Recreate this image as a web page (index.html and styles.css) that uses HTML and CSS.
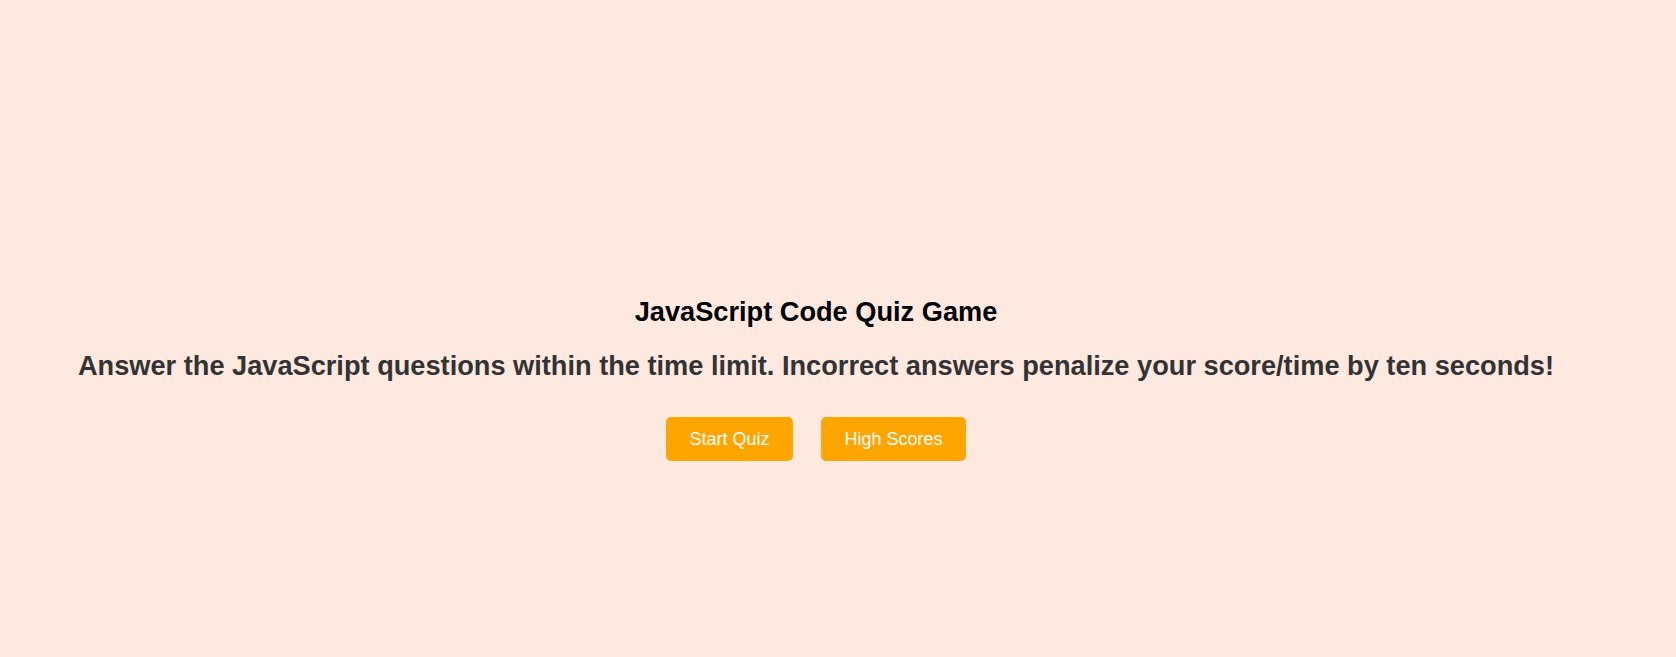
FILE: index.html
```html
<!DOCTYPE html>
<html lang="en">
<head>
<meta charset="utf-8">
<title>JavaScript Code Quiz Game</title>
<link rel="stylesheet" href="styles.css">
</head>
<body>
<main class="start-screen">
  <h1 class="title">JavaScript Code Quiz Game</h1>
  <p class="intro">Answer the JavaScript questions within the time limit. Incorrect answers penalize your score/time by ten seconds!</p>
  <div class="actions">
    <button class="btn" type="button">Start Quiz</button>
    <button class="btn" type="button">High Scores</button>
  </div>
</main>
</body>
</html>
```
FILE: styles.css
```css
html, body {
  margin: 0;
  padding: 0;
}
body {
  background: #fee9e0;
  font-family: "Liberation Sans", Arial, sans-serif;
  height: 657px;
}
.start-screen {
  display: flex;
  flex-direction: column;
  align-items: center;
  padding: 296px 44px 0 0;
}
.title {
  margin: 0;
  font-size: 27.2px;
  line-height: 32px;
  font-weight: bold;
  color: #000;
}
.intro {
  margin: 22px 0 0 0;
  font-size: 27.2px;
  line-height: 32px;
  font-weight: bold;
  color: #333;
  text-align: center;
  white-space: nowrap;
}
.actions {
  display: flex;
  gap: 28px;
  margin-top: 35px;
}
.btn {
  background: #ffa500;
  color: #fff;
  border: none;
  border-radius: 5px;
  height: 44px;
  padding: 0 23.5px;
  font-family: "Liberation Sans", Arial, sans-serif;
  font-size: 18px;
  cursor: pointer;
}
```
